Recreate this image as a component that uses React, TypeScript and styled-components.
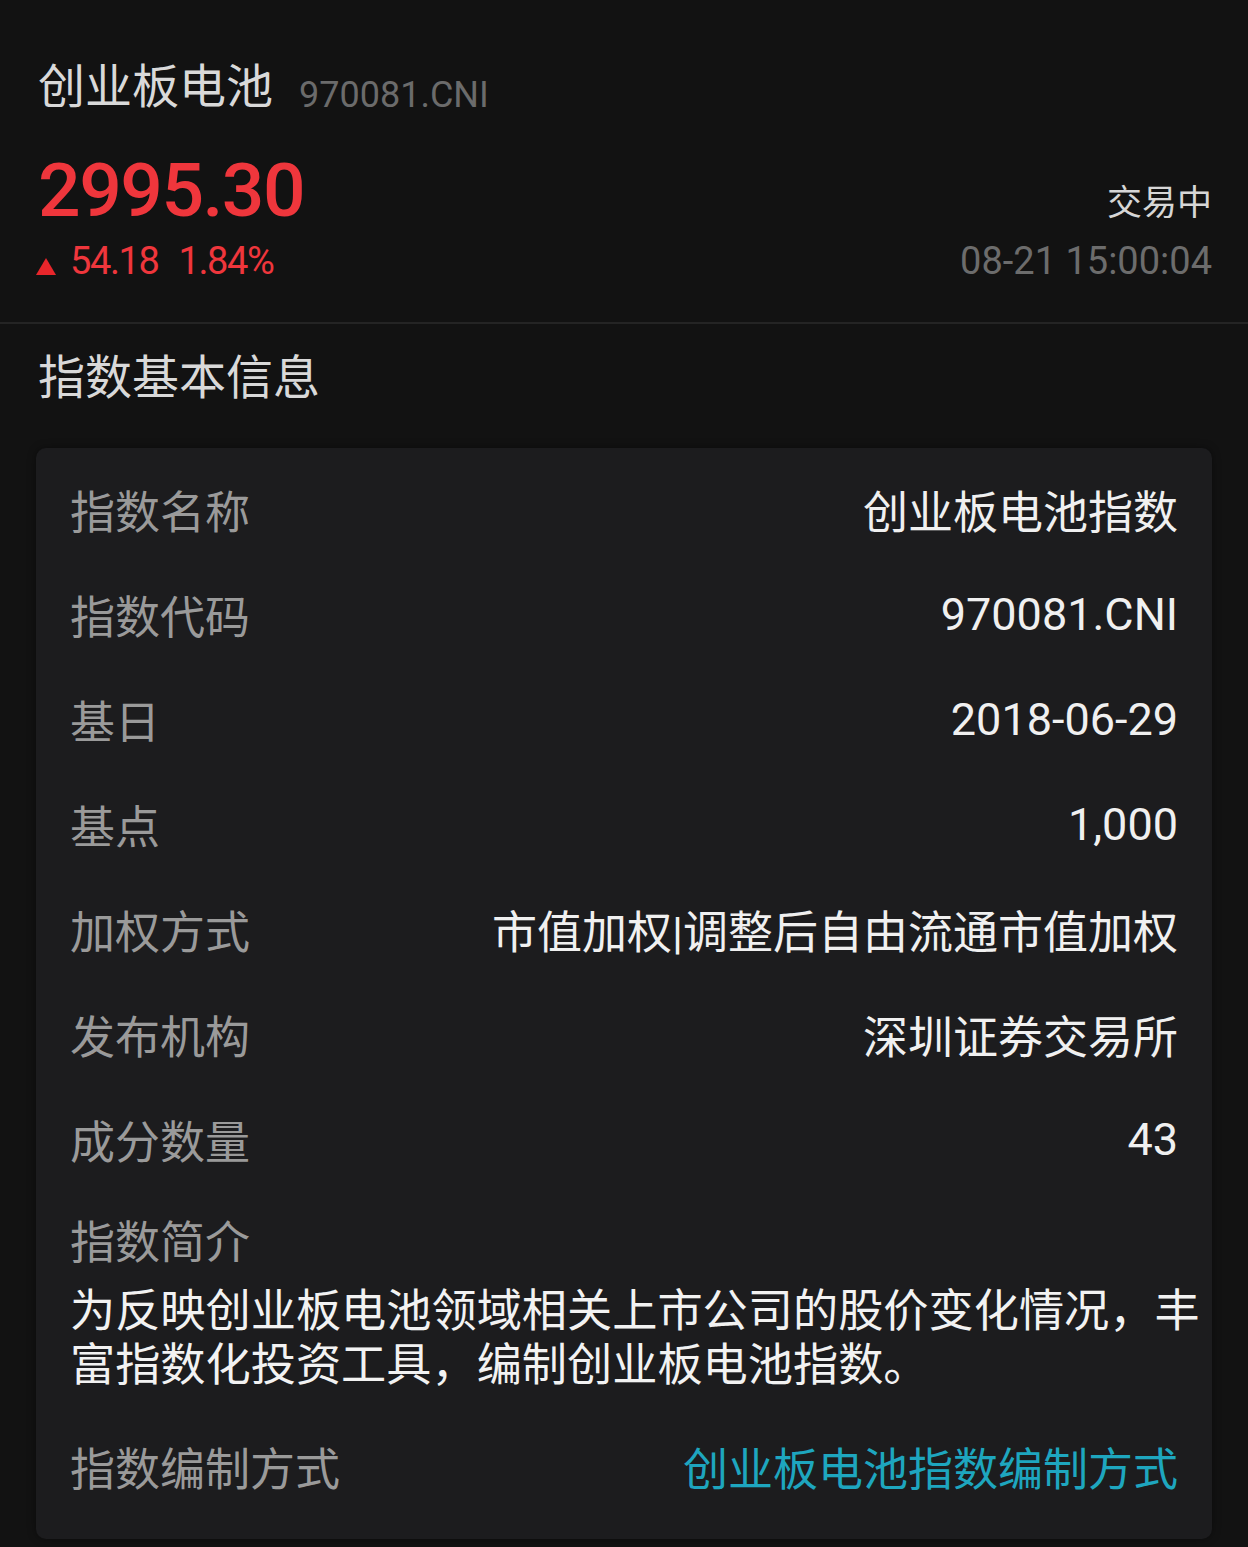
import React from "react";
import styled, { createGlobalStyle } from "styled-components";

const GlobalStyle = createGlobalStyle`
  html, body {
    margin: 0;
    padding: 0;
    background: #121212;
  }
  body {
    font-family: Roboto, "Noto Sans CJK SC", sans-serif;
    -webkit-font-smoothing: antialiased;
  }
`;

const Page = styled.div`
  min-height: 1547px;
  background: #121212;
`;

const Header = styled.header`
  padding: 57px 36px 39px 38px;
  border-bottom: 2px solid #242424;
`;

const TitleRow = styled.div`
  display: flex;
  align-items: flex-start;
  gap: 26px;
`;

const Title = styled.h1`
  margin: 0;
  font-size: 47px;
  line-height: 60px;
  font-weight: 400;
  color: #d9d9d9;
`;

const Code = styled.span`
  margin-top: 18px;
  font-size: 36px;
  line-height: 40px;
  color: #6b6b6b;
`;

const QuoteRow = styled.div`
  display: flex;
  justify-content: space-between;
  align-items: flex-end;
  margin-top: 33px;
`;

const Column = styled.div<{ $right?: boolean }>`
  display: flex;
  flex-direction: column;
  align-items: ${(p) => (p.$right ? "flex-end" : "flex-start")};
`;

const Price = styled.div`
  font-size: 75px;
  line-height: 80px;
  font-weight: 500;
  letter-spacing: -1.5px;
  color: #ef363c;
`;

const Change = styled.div`
  display: flex;
  align-items: center;
  gap: 20px;
  margin-top: 9px;
  font-size: 38px;
  line-height: 44px;
  letter-spacing: -1.4px;
  color: #ef363c;
`;

const Arrow = styled.span`
  width: 0;
  height: 0;
  margin: 10px -6px 0 -2px;
  border-left: 10px solid transparent;
  border-right: 10px solid transparent;
  border-bottom: 17px solid #e8262b;
`;

const Status = styled.div`
  font-size: 35px;
  line-height: 44px;
  color: #d6d6d6;
`;

const Time = styled.div`
  margin-top: 13px;
  font-size: 38px;
  line-height: 44px;
  color: #6c6c6c;
`;

const SectionTitle = styled.h2`
  margin: 24px 38px 40px;
  font-size: 47px;
  line-height: 60px;
  font-weight: 400;
  color: #d9d9d9;
`;

const Card = styled.section`
  margin: 0 36px;
  padding: 9px 34px 20px 34px;
  background: #1c1c1e;
  border-radius: 10px;
  box-shadow: 0 0 8px rgba(0, 0, 0, 0.4);
`;

const Row = styled.div`
  display: flex;
  justify-content: space-between;
  align-items: center;
  height: 105px;
`;

const Label = styled.span`
  font-size: 45px;
  color: #9a9a9a;
`;

const Value = styled.span<{ $link?: boolean }>`
  font-size: 45px;
  color: ${(p) => (p.$link ? "#1ea6bf" : "#f0f0f0")};
`;

const Intro = styled.div`
  padding-top: 25px;
  display: flex;
  flex-direction: column;
`;

const IntroLabel = styled(Label)`
  line-height: 54px;
`;

const IntroText = styled.p`
  margin: 14px -34px 21px 0;
  font-size: 45.2px;
  line-height: 54px;
  color: #f2f2f2;
`;

const rows: [string, string][] = [
  ["指数名称", "创业板电池指数"],
  ["指数代码", "970081.CNI"],
  ["基日", "2018-06-29"],
  ["基点", "1,000"],
  ["加权方式", "市值加权|调整后自由流通市值加权"],
  ["发布机构", "深圳证券交易所"],
  ["成分数量", "43"],
];

export default function App() {
  return (
    <Page>
      <GlobalStyle />
      <Header>
        <TitleRow>
          <Title>创业板电池</Title>
          <Code>970081.CNI</Code>
        </TitleRow>
        <QuoteRow>
          <Column>
            <Price>2995.30</Price>
            <Change>
              <Arrow />
              <span>54.18</span>
              <span>1.84%</span>
            </Change>
          </Column>
          <Column $right>
            <Status>交易中</Status>
            <Time>08-21 15:00:04</Time>
          </Column>
        </QuoteRow>
      </Header>

      <SectionTitle>指数基本信息</SectionTitle>

      <Card>
        {rows.map(([label, value]) => (
          <Row key={label}>
            <Label>{label}</Label>
            <Value>{value}</Value>
          </Row>
        ))}
        <Intro>
          <IntroLabel>指数简介</IntroLabel>
          <IntroText>
            为反映创业板电池领域相关上市公司的股价变化情况，丰富指数化投资工具，编制创业板电池指数。
          </IntroText>
        </Intro>
        <Row>
          <Label>指数编制方式</Label>
          <Value $link>创业板电池指数编制方式</Value>
        </Row>
      </Card>
    </Page>
  );
}
